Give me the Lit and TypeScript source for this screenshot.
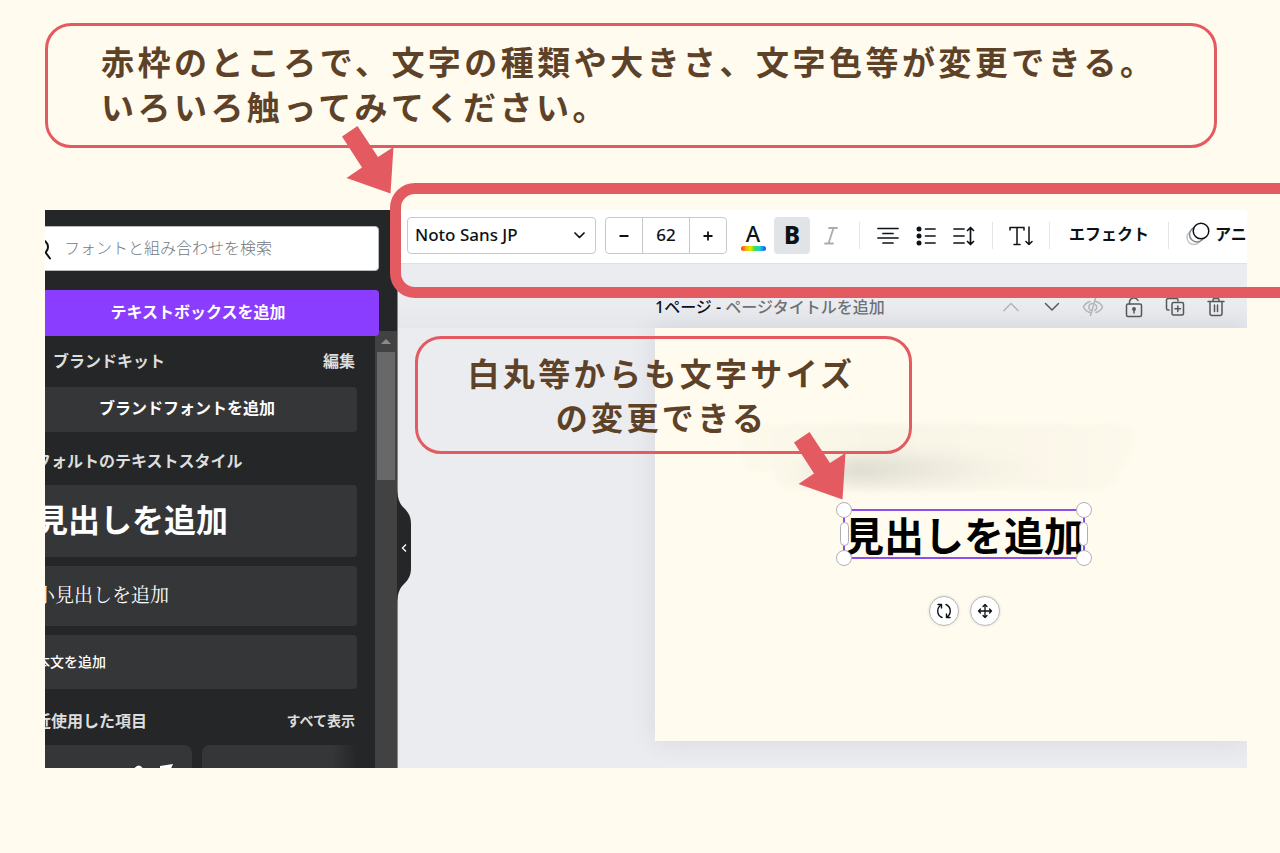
import { LitElement, html, css, svg } from "lit";
import { customElement } from "lit/decorators.js";

const arrow = () => html`
  <svg width="54" height="70" viewBox="0 0 54 70" aria-hidden="true">
    <path d="M1 11.500 16.500 1 37 32 52.500 22 49.500 68.500 5.500 53 21 42.500Z" fill="#e35b61" />
  </svg>
`;

const icon = (w: number, h: number, body: unknown) => html`
  <svg width=${w} height=${h} viewBox="0 0 ${w} ${h}" fill="none" stroke="currentColor"
    stroke-width="1.5" stroke-linecap="round" stroke-linejoin="round" aria-hidden="true">${body}</svg>
`;

@customElement("side-panel")
export class SidePanel extends LitElement {
  static styles = css`
    :host {
      display: flex;
      flex-direction: column;
      position: relative;
      width: 353px;
      flex: none;
      background: #252627;
      color: #fff;
    }
    * { box-sizing: border-box; }
    button {
      font: inherit;
      color: inherit;
      border: 0;
      margin: 0;
      cursor: pointer;
    }
    .clip {
      display: flex;
      flex-direction: column;
      flex: 1;
      min-height: 0;
      overflow: hidden;
      border-right: 1px solid #85868a;
    }
    .head {
      display: flex;
      flex-direction: column;
      gap: 19px;
      margin-left: -28px;
      padding: 16px 18px 0 0;
      position: relative;
      z-index: 1;
    }
    .search {
      display: flex;
      align-items: center;
      height: 45px;
      gap: 12px;
      padding: 0 0 2px 14px;
      background: #fff;
      border: 1px solid #b9bcbf;
      border-radius: 4px;
      color: #0d1216;
    }
    .search input {
      flex: 1;
      min-width: 0;
      border: 0;
      outline: 0;
      padding: 0;
      background: none;
      font: 300 16px/24px "Noto Sans", "Noto Sans CJK JP", sans-serif;
    }
    .search input::placeholder { color: #75797d; opacity: 1; }
    .primary {
      height: 46px;
      border-radius: 4px;
      background: #8b3dff;
      font-weight: 700;
      line-height: 24px;
      padding: 0 0 2px;
    }
    .body {
      display: flex;
      flex: 1;
      min-height: 0;
      margin-top: -5px;
    }
    .list {
      display: flex;
      flex-direction: column;
      flex: 1;
      min-width: 0;
      margin-left: -28px;
      padding: 18px 18px 0 0;
    }
    .row {
      display: flex;
      justify-content: space-between;
      align-items: center;
      height: 24px;
      padding: 0 2px;
      font-weight: 700;
      color: #dcdddd;
    }
    .row.brand { padding-left: 36px; }
    .row button { background: none; padding: 0; }
    .small { font-size: 14px; }
    .item {
      flex: none;
      background: #353638;
      border-radius: 4px;
      text-align: left;
      padding: 0 19px;
    }
    .item.font {
      height: 45px;
      margin: 14px 0 17px;
      text-align: center;
      font-weight: 700;
      padding-bottom: 3px;
    }
    .styles {
      display: flex;
      flex-direction: column;
      gap: 9px;
      margin: 12px 0 20px;
    }
    .item.h1 { height: 72px; font-size: 32px; font-weight: 700; padding-bottom: 2px; }
    .item.h2 { height: 60px; font-size: 19px; font-weight: 400; font-family: "Noto Serif CJK JP", "Noto Sans CJK JP", serif; padding-bottom: 5px; }
    .item.text { height: 54px; font-size: 14px; font-weight: 500; }
    .cards {
      display: flex;
      gap: 10px;
      margin-top: 12px;
    }
    .card {
      height: 60px;
      width: 175px;
      flex: none;
      border-radius: 8px;
      background: #353638;
      padding: 19px 18px;
      text-align: right;
    }
    .card.fade {
      flex: 1;
      width: auto;
      border-radius: 8px 0 0 0;
      background: linear-gradient(90deg, #353638 84%, #252627);
    }
    .bar {
      width: 22px;
      flex: none;
      background: #424242;
      padding: 8px 2px 0;
      display: flex;
      flex-direction: column;
      align-items: center;
      gap: 8px;
    }
    .thumb {
      width: 18px;
      height: 128px;
      background: #686868;
    }
    .tab {
      position: absolute;
      left: 352px;
      top: 280px;
      width: 15px;
      height: 112px;
      padding: 0;
      background: none;
    }
    svg { display: block; flex: none; }
  `;

  render() {
    return html`
      <div class="clip">
        <div class="head">
          <label class="search">
            ${icon(20, 24, svg`<g stroke-width="2"><circle cx="9" cy="11" r="7"/><path d="M14 17 18 22.500"/></g>`)}
            <input type="text" aria-label="検索" placeholder="フォントと組み合わせを検索" />
          </label>
          <button class="primary">テキストボックスを追加</button>
        </div>
        <div class="body">
          <div class="list">
            <div class="row brand"><span>ブランドキット</span><button>編集</button></div>
            <button class="item font">ブランドフォントを追加</button>
            <div class="row"><span>デフォルトのテキストスタイル</span></div>
            <div class="styles">
              <button class="item h1">見出しを追加</button>
              <button class="item h2">小見出しを追加</button>
              <button class="item text">本文を追加</button>
            </div>
            <div class="row"><span>最近使用した項目</span><button class="small">すべて表示</button></div>
            <div class="cards">
              <div class="card">
                <svg width="139" height="12" viewBox="0 0 139 12" fill="#fff" aria-hidden="true">
                  <path d="M99 4.500q5-6 9 0ZM125 2 138 0 136 4.500 125 4.500Z" />
                </svg>
              </div>
              <div class="card fade"></div>
            </div>
          </div>
          <div class="bar">
            <svg width="10" height="5" viewBox="0 0 10 5"><path d="M5 0 10 5H0Z" fill="#8b8b8b" /></svg>
            <div class="thumb"></div>
          </div>
        </div>
      </div>
      <button class="tab" aria-label="パネルを閉じる">
        <svg width="15" height="112" viewBox="0 0 15 112" aria-hidden="true">
          <path d="M0 0C1 10 3 14 7 18 12 23 14 27 14 34V78C14 85 12 89 7 94 3 98 1 102 0 112Z" fill="#252627" />
          <path d="M9 54.500 5.500 58 9 61.500" fill="none" stroke="#fff" stroke-width="1.300" />
        </svg>
      </button>
    `;
  }
}

@customElement("design-editor")
export class DesignEditor extends LitElement {
  static styles = css`
    :host {
      display: flex;
      flex-direction: column;
      flex: 1;
      min-width: 0;
      overflow: hidden;
      background: #ebecf0;
      color: #0d1216;
    }
    * { box-sizing: border-box; }
    svg { display: block; flex: none; }
    button {
      display: flex;
      align-items: center;
      justify-content: center;
      flex: none;
      border: 0;
      padding: 0;
      background: none;
      font: inherit;
      color: inherit;
      cursor: pointer;
    }
    .toolbar {
      display: flex;
      align-items: flex-start;
      height: 54px;
      flex: none;
      padding: 7px 0 0 9px;
      background: #fff;
      border-bottom: 1px solid #dfe1e4;
    }
    .toolbar > * { flex: none; }
    .family {
      position: relative;
      width: 189px;
      height: 37px;
    }
    .family select {
      appearance: none;
      width: 100%;
      height: 100%;
      border: 1px solid #c6c9cc;
      border-radius: 4px;
      padding: 0 28px 2px 7px;
      background: none;
      font: inherit;
      font-size: 17px;
      font-weight: 500;
      color: inherit;
    }
    .family svg { position: absolute; right: 11px; top: 15px; pointer-events: none; }
    .stepper {
      display: flex;
      height: 37px;
      width: 122px;
      margin-left: 9px;
      border: 1px solid #c6c9cc;
      border-radius: 4px;
    }
    .stepper button { width: 36px; }
    .stepper input {
      flex: 1;
      min-width: 0;
      padding: 0 0 1px;
      border: 1px solid #c6c9cc;
      border-width: 0 1px;
      background: none;
      text-align: center;
      font: inherit;
      font-size: 17px;
      font-weight: 500;
      color: inherit;
    }
    .tool { width: 38px; height: 37px; }
    .color {
      flex-direction: column;
      width: 26px;
      margin: 0 8px 0 13px;
      font-size: 22px;
      font-weight: 500;
      line-height: 26px;
    }
    .rainbow {
      width: 25px;
      height: 5px;
      border-radius: 3px;
      background: linear-gradient(90deg, #ff3b1f, #ffb700 22%, #d8f000 38%, #3de04b 55%, #19d3d6 74%, #1c4dff);
    }
    .bold {
      width: 36px;
      border-radius: 4px;
      background: #e0e4e7;
      font-size: 24px;
      font-weight: 800;
      padding-bottom: 2px;
    }
    .italic { width: 42px; color: #a9adb1; }
    .sep {
      width: 1px;
      height: 27px;
      margin: 5px 9px 0;
      background: #e3e5e8;
    }
    .sep.first { margin: 5px 9px 0 7px; }
    .label {
      height: 37px;
      font-weight: 700;
      padding: 0 10px 3px;
    }
    .animate { gap: 5px; padding: 0 0 3px 8px; }
    .pagebar {
      display: flex;
      align-items: center;
      height: 64px;
      flex: none;
      padding: 22px 11px 0 257px;
      background: linear-gradient(#ebecf0 60%, #e6e7eb);
    }
    .title { font-weight: 500; white-space: pre; line-height: 24px; }
    .muted { color: #6f7275; }
    .actions { display: flex; margin-left: auto; color: #55585c; }
    .actions button { width: 41px; height: 28px; }
    .actions .off { color: #b3b6b9; }
    .page {
      position: relative;
      flex: none;
      height: 413px;
      margin-left: 257px;
      background: #fffbee;
      box-shadow: 0 0 24px rgba(64, 70, 90, 0.12);
    }
    .brush { position: absolute; left: 80px; top: 82px; }
    .selected {
      position: absolute;
      left: 188px;
      top: 181px;
      width: 242px;
      height: 50px;
      padding-top: 4px;
      border: 2px solid #8b4ff0;
      display: flex;
      align-items: center;
      justify-content: center;
      font-size: 40px;
      font-weight: 700;
      line-height: 48px;
      white-space: nowrap;
      color: #000;
    }
    .handle {
      position: absolute;
      width: 16px;
      height: 16px;
      border-radius: 8px;
      background: #fff;
      border: 1px solid #adb0b3;
    }
    .nw { left: -9px; top: -9px; }
    .ne { right: -9px; top: -9px; }
    .sw { left: -9px; bottom: -9px; }
    .se { right: -9px; bottom: -9px; }
    .side { width: 9px; height: 24px; border-radius: 5px; top: 11px; }
    .w { left: -5px; }
    .e { right: -5px; }
    .knobs {
      position: absolute;
      left: 274px;
      top: 268px;
      display: flex;
      gap: 11px;
    }
    .knobs button {
      width: 30px;
      height: 30px;
      border-radius: 15px;
      border: 1px solid #b9bbbd;
      background: #fff;
      box-shadow: 0 0 3px rgba(0, 0, 0, 0.15);
    }
  `;

  render() {
    return html`
      <div class="toolbar">
        <div class="family">
          <select aria-label="フォント"><option>Noto Sans JP</option></select>
          ${icon(11, 7, svg`<path stroke-width="1.700" d="M1 1 5.500 5.500 10 1"/>`)}
        </div>
        <div class="stepper">
          <button aria-label="小さく">${icon(10, 10, svg`<path stroke-width="2" stroke-linecap="butt" d="M.5 5H9.500"/>`)}</button>
          <input type="text" aria-label="フォントサイズ" value="62" />
          <button aria-label="大きく">${icon(10, 10, svg`<path stroke-width="1.800" stroke-linecap="butt" d="M.5 5H9.500M5 .5V9.500"/>`)}</button>
        </div>
        <button class="tool color" aria-label="文字色"><span>A</span><span class="rainbow"></span></button>
        <button class="tool bold" aria-label="太字">B</button>
        <button class="tool italic" aria-label="斜体">
          ${icon(14, 18, svg`<path stroke-width="1.800" d="M5 1H13M1 16.500H9M9.500 1 4.500 16.500"/>`)}
        </button>
        <span class="sep first"></span>
        <button class="tool" aria-label="配置">
          ${icon(22, 18, svg`<path stroke-width="1.700" d="M1 1.500H21M6 6.500H16M1 11H21M6 16H16"/>`)}
        </button>
        <button class="tool" aria-label="箇条書き">
          ${icon(20, 20, svg`<path stroke-width="1.700" d="M9.500 3H19M9.500 10H19M9.500 17H19"/><g fill="currentColor" stroke="none"><circle cx="3" cy="3" r="2.500"/><circle cx="3" cy="10" r="2.500"/><circle cx="3" cy="17" r="2.500"/></g>`)}
        </button>
        <button class="tool" aria-label="間隔">
          ${icon(22, 20, svg`<path stroke-width="1.700" d="M1 3H11M1 10H11M1 17H11M17.500 1.500V18.500M14.500 4.500 17.500 1.500 20.500 4.500M14.500 15.500 17.500 18.500 20.500 15.500"/>`)}
        </button>
        <span class="sep"></span>
        <button class="tool" aria-label="縦書き">
          ${icon(24, 20, svg`<path d="M1 4V1.500H15V4M8 1.500V18.500M5 18.500H11M20 1V18.500M17 15.500 20 18.500 23 15.500"/>`)}
        </button>
        <span class="sep"></span>
        <button class="label">エフェクト</button>
        <span class="sep"></span>
        <button class="label animate">
          ${icon(24, 24, svg`<circle cx="8" cy="15.500" r="7" stroke="#c4c6c8"/><circle cx="11" cy="12.500" r="7.500" stroke="#85888b" fill="#fff"/><circle cx="15" cy="9" r="7.800" fill="#fff"/>`)}
          <span>アニメート</span>
        </button>
      </div>
      <div class="pagebar">
        <span class="title">1ページ - <span class="muted">ページタイトルを追加</span></span>
        <div class="actions">
          <button class="off" aria-label="上へ">${icon(16, 10, svg`<path d="M1 8.500 8 1.500 15 8.500"/>`)}</button>
          <button aria-label="下へ">${icon(16, 10, svg`<path d="M1.500 1.500 8 8 14.500 1.500"/>`)}</button>
          <button class="off" aria-label="非表示">
            ${icon(22, 20, svg`<path d="M8 4.500C5 5.500 2.500 7.500 1.500 10 2.500 12.500 5 14.500 8 15.500M14 4.500C17 5.500 19.500 7.500 20.500 10 19.500 12.500 17 14.500 14 15.500M13.500 1.500 8.500 18.500M11 6.500C5.500 6.500 6 13.500 9.500 13.500M13.500 7.500C15.500 9.500 15 12.500 12.500 13.500"/>`)}
          </button>
          <button aria-label="ロック">
            ${icon(18, 22, svg`<path d="M4.500 8V6A4.500 4.500 0 0 1 13 4.500"/><rect x="1.500" y="8" width="15" height="12.500" rx="1.500"/><path d="M9 13.500V17"/><circle cx="9" cy="13" r="1.200" fill="currentColor"/>`)}
          </button>
          <button aria-label="複製">
            ${icon(20, 20, svg`<path d="M4 13H3A1.500 1.500 0 0 1 1.500 11.500V3A1.500 1.500 0 0 1 3 1.500H11.500A1.500 1.500 0 0 1 13 3V4"/><rect x="7" y="5.500" width="11.500" height="12.500" rx="1.500"/><path d="M10 11.800H15.500M12.800 9V14.500"/>`)}
          </button>
          <button aria-label="削除">
            ${icon(18, 20, svg`<path d="M1 4.500H17M6 4V3A1.500 1.500 0 0 1 7.500 1.500H10.500A1.500 1.500 0 0 1 12 3V4M3 4.500V16.500A2 2 0 0 0 5 18.500H13A2 2 0 0 0 15 16.500V4.500M7.500 8V14.500M10.500 8V14.500"/>`)}
          </button>
        </div>
      </div>
      <div class="page">
        <svg class="brush" width="420" height="100" viewBox="0 0 420 100" aria-hidden="true">
          <defs>
            <filter id="soft" x="-10%" y="-40%" width="120%" height="180%"><feGaussianBlur stdDeviation="2" /></filter>
            <filter id="softer" x="-20%" y="-100%" width="140%" height="300%"><feGaussianBlur stdDeviation="8" /></filter>
            <linearGradient id="wash" x1="0" x2="1"><stop offset="0" stop-color="#fdf9eb" /><stop offset=".35" stop-color="#f8f4e6" /><stop offset=".8" stop-color="#fbf7e9" /><stop offset="1" stop-color="#fdf9eb" /></linearGradient>
            <linearGradient id="stroke" x1="0" x2="1"><stop offset="0" stop-color="#e2dfd4" stop-opacity="0" /><stop offset=".25" stop-color="#dcd9cf" /><stop offset="1" stop-color="#f3f0e3" stop-opacity="0" /></linearGradient>
          </defs>
          <path d="M8 14H370Q402 8 400 34 396 54 384 58 388 78 360 80H60Q38 78 40 62H14Q0 44 8 14Z" fill="url(#wash)" filter="url(#soft)" />
          <path d="M50 58Q120 46 190 46T330 60Q260 72 180 72T50 66Z" fill="url(#stroke)" filter="url(#softer)" />
        </svg>
        <div class="selected">
          見出しを追加
          <span class="handle nw"></span><span class="handle ne"></span>
          <span class="handle sw"></span><span class="handle se"></span>
          <span class="handle side w"></span><span class="handle side e"></span>
        </div>
        <div class="knobs">
          <button aria-label="回転">
            ${icon(16, 16, svg`<path stroke-width="1.400" d="M6 14.500C.5 12 .5 5 5 2M2 1.500H5.500V5M10 1.500C15.500 4 15.500 11 11 14M14 14.500H10.500V11"/>`)}
          </button>
          <button aria-label="移動">
            ${icon(16, 16, svg`<path stroke-width="1.300" d="M8 1.500V14.500M1.500 8H14.500M6 3.500 8 1.500 10 3.500M6 12.500 8 14.500 10 12.500M3.500 6 1.500 8 3.500 10M12.500 6 14.500 8 12.500 10"/>`)}
          </button>
        </div>
      </div>
    `;
  }
}

@customElement("app-root")
export class AppRoot extends LitElement {
  static styles = css`
    :host {
      display: block;
      box-sizing: border-box;
      min-height: 100vh;
      overflow: hidden;
      padding: 23px 33px 40px 45px;
      background: #fffbee;
      font: 400 16px/24px "Noto Sans", "Noto Sans CJK JP", sans-serif;
    }
    .callout {
      box-sizing: border-box;
      margin: 0;
      border: 3px solid #e35b61;
      border-radius: 26px;
      color: #5e4228;
      font-family: "Noto Sans CJK JP", sans-serif;
      font-weight: 700;
      letter-spacing: 0.105em;
    }
    .intro {
      margin: 0 30px 62px 0;
      padding: 13px 0 16px 53px;
      font-size: 33px;
      line-height: 45px;
    }
    .stage { position: relative; }
    .window {
      display: flex;
      height: 558px;
      overflow: hidden;
    }
    .frame {
      position: absolute;
      box-sizing: border-box;
      left: 345px;
      right: -60px;
      top: -27px;
      height: 115px;
      border: 11px solid #e35b61;
      border-radius: 25px;
      pointer-events: none;
    }
    .hint {
      position: absolute;
      left: 370px;
      top: 126px;
      width: 497px;
      padding: 11px 4px 13px 0;
      text-align: center;
      font-size: 32px;
      line-height: 44px;
    }
    .arrow { position: absolute; line-height: 0; pointer-events: none; }
    .to-toolbar { left: 296px; top: -85px; }
    .to-handle { left: 748px; top: 221px; }
  `;

  render() {
    return html`
      <p class="callout intro">
        赤枠のところで、文字の種類や大きさ、文字色等が変更できる。<br />いろいろ触ってみてください。
      </p>
      <div class="stage">
        <div class="window">
          <side-panel></side-panel>
          <design-editor></design-editor>
        </div>
        <div class="frame"></div>
        <p class="callout hint">白丸等からも文字サイズ<br />の変更できる</p>
        <div class="arrow to-toolbar">${arrow()}</div>
        <div class="arrow to-handle">${arrow()}</div>
      </div>
    `;
  }
}
